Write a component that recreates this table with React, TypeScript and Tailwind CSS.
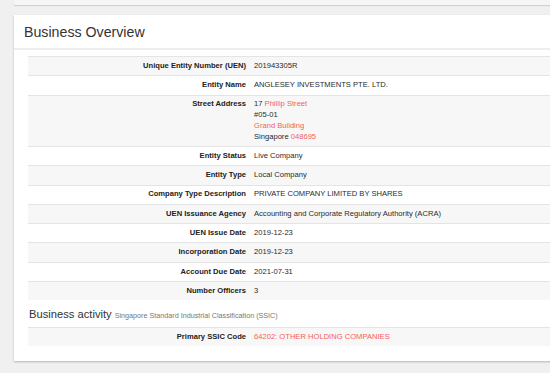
import React from 'react';

type Row = { label: string; value: React.ReactNode };

const Red = ({ children }: { children: React.ReactNode }) => (
  <span className="text-[#f65d5d]">{children}</span>
);

const rows: Row[] = [
  { label: 'Unique Entity Number (UEN)', value: '201943305R' },
  { label: 'Entity Name', value: 'ANGLESEY INVESTMENTS PTE. LTD.' },
  {
    label: 'Street Address',
    value: (
      <>
        <div>17 <Red>Phillip Street</Red></div>
        <div>#05-01</div>
        <div><Red>Grand Building</Red></div>
        <div>Singapore <Red>048695</Red></div>
      </>
    ),
  },
  { label: 'Entity Status', value: 'Live Company' },
  { label: 'Entity Type', value: 'Local Company' },
  { label: 'Company Type Description', value: 'PRIVATE COMPANY LIMITED BY SHARES' },
  { label: 'UEN Issuance Agency', value: 'Accounting and Corporate Regulatory Authority (ACRA)' },
  { label: 'UEN Issue Date', value: '2019-12-23' },
  { label: 'Incorporation Date', value: '2019-12-23' },
  { label: 'Account Due Date', value: '2021-07-31' },
  { label: 'Number Officers', value: '3' },
];

// striped info table, label right aligned
const InfoTable = ({ items }: { items: Row[] }) => (
  <div className="flex flex-col">
    {items.map((r, i) => (
      <div
        key={r.label}
        className={`flex border-t border-[#e4e4e4] ${i % 2 === 0 ? 'bg-[#f7f7f7]' : 'bg-white'}`}
      >
        <div className="w-[222px] shrink-0 pr-[4px] py-[3.8px] text-right font-bold leading-[10.7px] text-[#222]">
          {r.label}
        </div>
        <div className="pl-[4px] py-[3.8px] leading-[10.7px]">{r.value}</div>
      </div>
    ))}
  </div>
);

export default function App() {
  return (
    <div
      className="h-[373px] w-[550px] overflow-hidden bg-[#f0f0f0] text-[7.6px] text-[#2a2a2a]"
      style={{ fontFamily: '"Liberation Sans", Arial, sans-serif' }}
    >
      {/* previous panel, cut off at the top */}
      <div className="ml-[14px] h-[5px] w-[560px] bg-[#f5f5f5] shadow-[0_1px_1px_rgba(0,0,0,0.12)]" />

      <div className="ml-[14px] mt-[10px] w-[560px] bg-white shadow-[0_1px_2px_rgba(0,0,0,0.25)]">
        <div className="flex h-[35px] items-center border-b-2 border-[#eeeeee] px-[10px] pt-[1px]">
          <h2 className="text-[14.2px] leading-none text-[#333]">Business Overview</h2>
        </div>

        <div className="px-[14px] pt-[6px] pb-[15px]">
          <InfoTable items={rows} />

          <div className="mt-[8px] mb-[5px] flex items-baseline gap-[3px] pl-[1px]">
            <span className="text-[11.2px] leading-[13px] text-[#333]">Business activity</span>
            <span className="text-[7.2px] text-[#777]">
              Singapore Standard Industrial Classification (SSIC)
            </span>
          </div>

          <InfoTable
            items={[
              { label: 'Primary SSIC Code', value: <Red>64202: OTHER HOLDING COMPANIES</Red> },
            ]}
          />
        </div>
      </div>
    </div>
  );
}
